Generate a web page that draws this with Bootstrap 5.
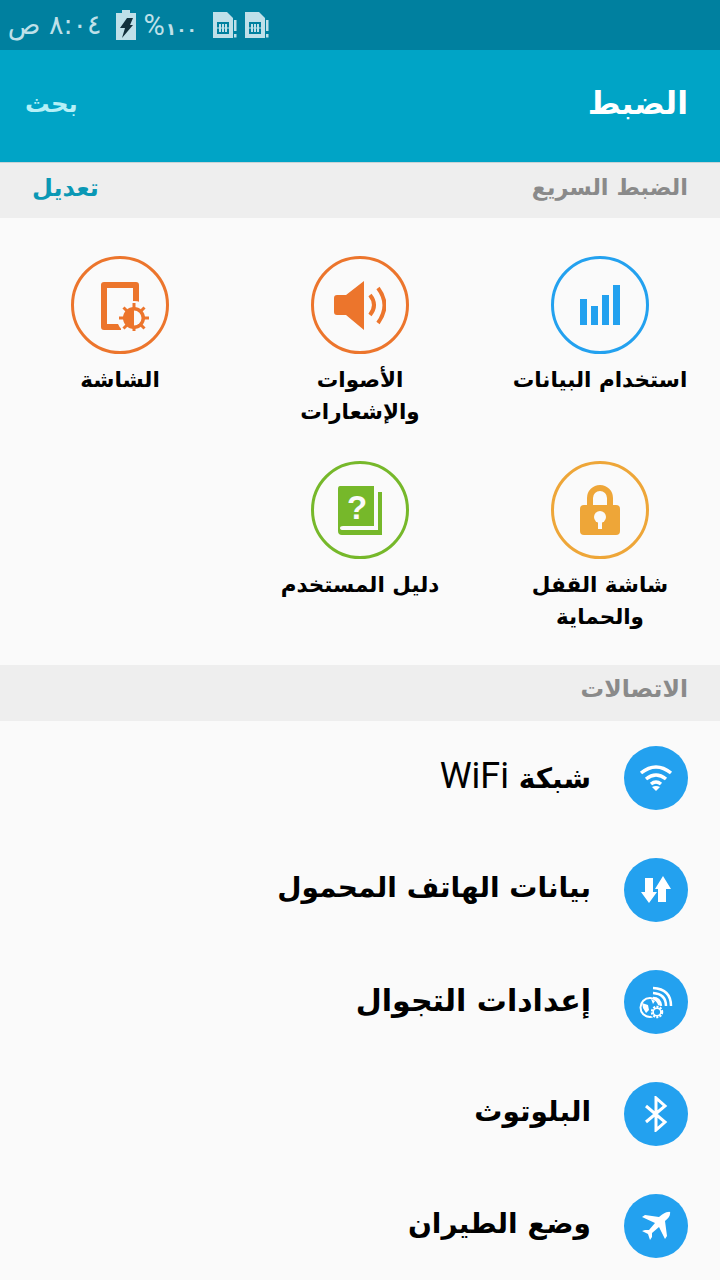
<!DOCTYPE html>
<html lang="ar" dir="rtl">
<head>
  <meta charset="UTF-8">
  <title>الضبط</title>
  <meta name="viewport" content="width=device-width, initial-scale=1">
  <link href="https://cdn.jsdelivr.net/npm/bootstrap@5.3.0/dist/css/bootstrap.min.css" rel="stylesheet">
  <style>
    html, body { height: 1280px; overflow: hidden; }
    body { background: #fafafa; font-family: "DejaVu Sans", sans-serif; color: #000; }
    .status-bar { height: 50px; background: #00809f; color: #bfe0e9; font-size: 24px; padding-right: 451px; gap: 8px; white-space: nowrap; }
    .status-pct { margin-right: 8px; font-size: 17px; font-weight: 700; line-height: 1; }
    .status-pct b { font-family: Roboto, sans-serif; font-weight: 400; font-size: 29px; margin-right: 1px; }
    .status-time { margin-right: 6px; font-size: 27px; }
    .app-bar { height: 113px; background: #00a4c6; border-bottom: 1px solid #c9d3d6; padding: 0 32px 4px 25px; }
    .app-title { font-size: 31.5px; font-weight: 700; color: #fff; }
    .app-search { font-size: 24.5px; font-weight: 700; color: #b5f0f7; }
    .sec-head { height: 55px; background: #eeeeee; padding: 0 32px 5px; font-size: 22.5px; font-weight: 700; color: #8a8a8a; }
    .sec-head.two { height: 56px; padding-bottom: 7px; font-size: 23.5px; }
    .edit-link { color: #0a98b5; font-size: 24px; }
    .quick-grid { height: 447px; padding-top: 38px; display: grid; grid-template-columns: repeat(3, 240px); grid-template-rows: 205px 205px; }
    .quick-item { text-align: center; }
    .quick-ring { width: 98px; height: 98px; border-radius: 50%; border: 3px solid; background: transparent; }
    .quick-label { font-size: 21.5px; font-weight: 700; line-height: 32px; margin-top: 10px; }
    .ring-blue { border-color: #23a1ef; }
    .ring-orange { border-color: #ec752c; }
    .ring-amber { border-color: #eea638; }
    .ring-green { border-color: #76b82a; }
    .conn-row { height: 112px; padding-right: 32px; gap: 33px; }
    .conn-icon { width: 64px; height: 64px; border-radius: 50%; background: #23a1ef; flex: none; }
    .conn-text { font-size: 28px; font-weight: 700; padding-bottom: 4px; }
    .conn-text.wide { font-size: 30px; }
    .conn-latin { font-family: Roboto, sans-serif; font-weight: 400; font-size: 36px; }
    .conn-list { padding-top: 1px; }
  </style>
</head>
<body>

  <!-- شريط الحالة -->
  <div class="status-bar d-flex align-items-center">
    <svg width="24" height="28" viewBox="0 0 24 28"><path fill="#bfe0e9" d="M0 1h14l6 6v20H0z"/><path fill="#00809f" d="M4 11h12v12H4z"/><path fill="#bfe0e9" d="M6 13h2v8H6zM9 13h2v8H9zM12 13h2v8h-2zM4 16.500h12v1H4z"/><path fill="#bfe0e9" d="M21 9h2.500v11H21zM21 23h2.500v3.500H21z"/></svg>
    <svg width="24" height="28" viewBox="0 0 24 28"><path fill="#bfe0e9" d="M0 1h14l6 6v20H0z"/><path fill="#00809f" d="M4 11h12v12H4z"/><path fill="#bfe0e9" d="M6 13h2v8H6zM9 13h2v8H9zM12 13h2v8h-2zM4 16.500h12v1H4z"/><path fill="#bfe0e9" d="M21 9h2.500v11H21zM21 23h2.500v3.500H21z"/></svg>
    <span class="status-pct">١٠٠<b>%</b></span>
    <svg width="20" height="30" viewBox="0 0 20 30"><path fill="#bfe0e9" d="M6 0h8v3h6v27H0V3h6z"/><path fill="#12303c" d="M11 8h6l-3 7h3L6 28l3-10H4z"/></svg>
    <span class="status-time">٨:٠٤ ص</span>
  </div>

  <!-- الشريط العلوي -->
  <div class="app-bar d-flex align-items-center justify-content-between">
    <span class="app-title">الضبط</span>
    <span class="app-search">بحث</span>
  </div>

  <div class="sec-head d-flex align-items-center justify-content-between">
    <span>الضبط السريع</span>
    <span class="edit-link">تعديل</span>
  </div>

  <!-- الضبط السريع -->
  <div class="quick-grid">
    <div class="quick-item">
      <div class="quick-ring ring-blue mx-auto d-flex align-items-center justify-content-center">
        <svg width="42" height="42" viewBox="0 0 42 42"><path fill="#23a1ef" d="M1 15h7v26H1zM12 22h7v19h-7zM23 11h7v30h-7zM34 1h7v40h-7z"/></svg>
      </div>
      <div class="quick-label">استخدام البيانات</div>
    </div>
    <div class="quick-item">
      <div class="quick-ring ring-orange mx-auto d-flex align-items-center justify-content-center">
        <svg width="52" height="50" viewBox="0 0 52 50"><path fill="#ec752c" d="M3 15h9L30 1v49L12 35H3q-3 0-3-3V18q0-3 3-3z"/><path fill="none" stroke="#ec752c" stroke-width="4" d="M36 15q8 10 0 20M44 8q13 17 0 35"/></svg>
      </div>
      <div class="quick-label">الأصوات<br>والإشعارات</div>
    </div>
    <div class="quick-item">
      <div class="quick-ring ring-orange mx-auto d-flex align-items-center justify-content-center">
        <svg width="58" height="52" viewBox="0 0 58 52"><path fill="none" stroke="#ec752c" stroke-width="6" stroke-linejoin="round" d="M30 48H13V6h32v20"/><circle cx="43" cy="39" r="17" fill="#fafafa"/><g stroke="#ec752c" stroke-width="3"><path d="M43 24v30M28 39h30M32.500 28.500l21 21M53.500 28.500l-21 21"/></g><circle cx="43" cy="39" r="11" fill="#ec752c"/><path fill="#fafafa" d="M43 31.500a7.500 7.500 0 0 1 0 15z"/></svg>
      </div>
      <div class="quick-label">الشاشة</div>
    </div>
    <div class="quick-item">
      <div class="quick-ring ring-amber mx-auto d-flex align-items-center justify-content-center">
        <svg width="40" height="50" viewBox="0 0 40 50"><path fill="none" stroke="#eea638" stroke-width="6" d="M10 22V13a10 10 0 0 1 20 0v9"/><rect x="0" y="20" width="40" height="30" rx="4" fill="#eea638"/><circle cx="20" cy="32" r="6" fill="#fafafa"/><path fill="#fafafa" d="M18 33h4v11h-4z"/></svg>
      </div>
      <div class="quick-label">شاشة القفل<br>والحماية</div>
    </div>
    <div class="quick-item">
      <div class="quick-ring ring-green mx-auto d-flex align-items-center justify-content-center">
        <svg width="46" height="49" viewBox="0 0 46 49"><path fill="#76b82a" d="M3 0H37V40H6q-3 0-3 2t3 2H41V6h4V49H5q-4 0-4-4V3q0-3 2-3z"/><text x="20" y="33" text-anchor="middle" font-family="Liberation Sans" font-weight="700" font-size="33" fill="#fafafa">?</text></svg>
      </div>
      <div class="quick-label">دليل المستخدم</div>
    </div>
  </div>

  <div class="sec-head two d-flex align-items-center">
    <span>الاتصالات</span>
  </div>

  <!-- الاتصالات -->
  <div class="conn-list">
    <div class="conn-row d-flex align-items-center">
      <div class="conn-icon d-flex align-items-center justify-content-center">
        <svg width="34" height="28" viewBox="0 0 34 28"><g fill="none" stroke="#fff" stroke-width="3.500"><path d="M2 9q15-12 30 0M7 15q10-8 20 0"/><path d="M12 20q5-4 10 0"/></g><path fill="#fff" d="M13 23q4-2 8 0l-4 4z"/></svg>
      </div>
      <div class="conn-text">شبكة <span class="conn-latin">WiFi</span></div>
    </div>
    <div class="conn-row d-flex align-items-center">
      <div class="conn-icon d-flex align-items-center justify-content-center">
        <svg width="30" height="28" viewBox="0 0 30 28"><path fill="#fff" d="M4 2h8v14h4L8 27 0 16h4zM22 0l8 13h-5v13h-8V13h-3z"/></svg>
      </div>
      <div class="conn-text">بيانات الهاتف المحمول</div>
    </div>
    <div class="conn-row d-flex align-items-center">
      <div class="conn-icon d-flex align-items-center justify-content-center">
        <svg width="34" height="34" viewBox="0 0 34 34"><g fill="none" stroke="#fff"><circle cx="11" cy="22.500" r="9.500" stroke-width="2"/><path stroke-width="2.500" d="M14 3q18 1 18 18M14 8q13 1 13 13M14 13q7 0 8 8"/></g><path fill="#fff" d="M3 18l6 2 1 5-3 3-3-5zM12 14l4 2-2 3z"/><circle cx="18" cy="27" r="7" fill="#23a1ef"/><circle cx="18" cy="27" r="5" fill="none" stroke="#fff" stroke-width="2.500" stroke-dasharray="2 1.200"/><circle cx="18" cy="27" r="3.800" fill="none" stroke="#fff" stroke-width="1.500"/></svg>
      </div>
      <div class="conn-text wide">إعدادات التجوال</div>
    </div>
    <div class="conn-row d-flex align-items-center">
      <div class="conn-icon d-flex align-items-center justify-content-center">
        <svg width="24" height="36" viewBox="0 0 24 36"><path fill="none" stroke="#fff" stroke-width="3" d="M2 10l19 16-9 8V2l9 8L2 26"/></svg>
      </div>
      <div class="conn-text">البلوتوث</div>
    </div>
    <div class="conn-row d-flex align-items-center">
      <div class="conn-icon d-flex align-items-center justify-content-center">
        <svg width="30" height="30" viewBox="0 0 30 30"><path fill="#fff" d="M27 1q3-1 2 2 0 3-5 7l2 15-2 3-6-12-7 6v4l-2 3-2-6-6-3 3-1h4l6-7L1 6l3-2 14 2q6-5 9-5z"/></svg>
      </div>
      <div class="conn-text">وضع الطيران</div>
    </div>
  </div>

  <script src="https://cdn.jsdelivr.net/npm/bootstrap@5.3.0/dist/js/bootstrap.bundle.min.js"></script>
</body>
</html>
